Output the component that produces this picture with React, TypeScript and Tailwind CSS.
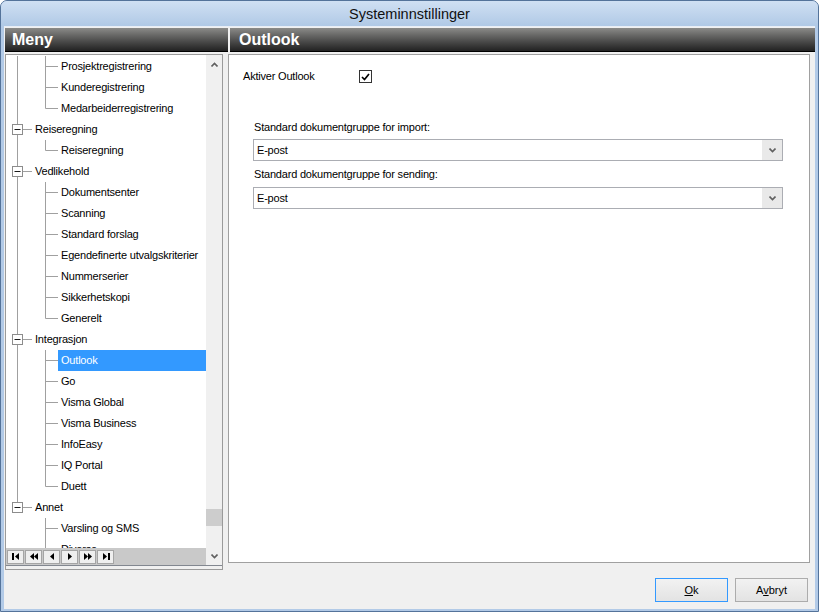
import React from 'react';

type Row = { t: string; lvl: 0 | 1; last?: boolean; lastTop?: boolean; noTop?: boolean; sel?: boolean };

const rows: Row[] = [
  { t: 'Prosjektregistrering', lvl: 1 },
  { t: 'Kunderegistrering', lvl: 1 },
  { t: 'Medarbeiderregistrering', lvl: 1, last: true },
  { t: 'Reiseregning', lvl: 0 },
  { t: 'Reiseregning', lvl: 1, last: true },
  { t: 'Vedlikehold', lvl: 0 },
  { t: 'Dokumentsenter', lvl: 1 },
  { t: 'Scanning', lvl: 1 },
  { t: 'Standard forslag', lvl: 1 },
  { t: 'Egendefinerte utvalgskriterier', lvl: 1 },
  { t: 'Nummerserier', lvl: 1 },
  { t: 'Sikkerhetskopi', lvl: 1 },
  { t: 'Generelt', lvl: 1, last: true },
  { t: 'Integrasjon', lvl: 0 },
  { t: 'Outlook', lvl: 1, sel: true },
  { t: 'Go', lvl: 1 },
  { t: 'Visma Global', lvl: 1 },
  { t: 'Visma Business', lvl: 1 },
  { t: 'InfoEasy', lvl: 1 },
  { t: 'IQ Portal', lvl: 1 },
  { t: 'Duett', lvl: 1, last: true },
  { t: 'Annet', lvl: 0, lastTop: true },
  { t: 'Varsling og SMS', lvl: 1, noTop: true },
  { t: 'Diverse', lvl: 1, noTop: true },
];

const LINE = '#a0a0a0';

function TreeRow({ r }: { r: Row }) {
  if (r.lvl === 0) {
    return (
      <div className="flex h-[21px] shrink-0 items-center">
        <svg width="26" height="21" className="shrink-0">
          <line x1="11.5" y1="0" x2="11.5" y2="5" stroke={LINE} />
          {!r.lastTop && <line x1="11.5" y1="16" x2="11.5" y2="21" stroke={LINE} />}
          <rect x="6.5" y="5.5" width="10" height="10" fill="#fff" stroke="#8c8c8c" />
          <line x1="8.5" y1="10.5" x2="14.5" y2="10.5" stroke="#1a1a1a" />
          <line x1="17" y1="10.5" x2="26" y2="10.5" stroke={LINE} />
        </svg>
        <span className="pl-[3px] leading-[13px]">{r.t}</span>
      </div>
    );
  }
  return (
    <div className="flex h-[21px] shrink-0 items-stretch">
      <svg width="52" height="21" className="shrink-0">
        {!r.noTop && <line x1="11.5" y1="0" x2="11.5" y2="21" stroke={LINE} />}
        <line x1="39.5" y1="0" x2="39.5" y2={r.last ? 10.5 : 21} stroke={LINE} />
        <line x1="39.5" y1="10.5" x2="52" y2="10.5" stroke={LINE} />
      </svg>
      <div className={`flex flex-1 items-center pl-[3px] leading-[13px] ${r.sel ? 'bg-[#3399ff] text-white' : ''}`}>
        {r.t}
      </div>
    </div>
  );
}

function NavGlyph({ kind }: { kind: number }) {
  const l = (x: number) => `${x + 4},0 ${x + 4},7 ${x},3.5`;
  const rt = (x: number) => `${x},0 ${x},7 ${x + 4},3.5`;
  return (
    <svg width="10" height="7">
      {kind === 0 && (<><rect x="1" y="0" width="2" height="7" fill="#000" /><polygon points={l(4)} fill="#000" /></>)}
      {kind === 1 && (<><polygon points={l(1)} fill="#000" /><polygon points={l(5)} fill="#000" /></>)}
      {kind === 2 && <polygon points={l(3)} fill="#000" />}
      {kind === 3 && <polygon points={rt(3)} fill="#000" />}
      {kind === 4 && (<><polygon points={rt(1)} fill="#000" /><polygon points={rt(5)} fill="#000" /></>)}
      {kind === 5 && (<><polygon points={rt(2)} fill="#000" /><rect x="7" y="0" width="2" height="7" fill="#000" /></>)}
    </svg>
  );
}

function Chevron({ up }: { up?: boolean }) {
  return (
    <svg width="7" height="5">
      <path d={up ? 'M0.5 4.5 L3.5 1.5 L6.5 4.5' : 'M0.5 0.5 L3.5 3.5 L6.5 0.5'} fill="none" stroke="#606060" strokeWidth="1.6" />
    </svg>
  );
}

function Select() {
  return (
    <div className="flex h-[22px] w-[530px] border border-[#abadb3] bg-white">
      <div className="flex flex-1 items-center pl-[3px]">E-post</div>
      <div className="flex w-[20px] items-center justify-center bg-[#e9e9e9]">
        <Chevron />
      </div>
    </div>
  );
}

export default function App() {
  return (
    <div className="flex h-[612px] w-[819px] flex-col overflow-hidden rounded-t-[7px] border border-[#54739a] bg-[#b2cae7] px-[3px] pb-[2px] font-['Liberation_Sans',Arial,sans-serif] text-[11px] tracking-[-0.2px] text-black">
      {/* Title bar */}
      <div className="-mx-[3px] flex h-[25px] shrink-0 items-center justify-center bg-linear-to-b from-[#d0e0f3] to-[#b0c9e6] pt-[3px] text-[14.5px] tracking-normal text-[#111]">
        Systeminnstillinger
      </div>

      {/* Client area */}
      <div className="flex flex-1 flex-col border-t border-[#e8eef6] bg-[#f0f0f0] pl-[1px] pt-[1px]">
        <div className="flex">
          {/* Left column */}
          <div className="flex w-[223px] flex-col">
            <div className="flex h-[24px] items-center border-b border-black bg-linear-to-b from-[#8b8b89] to-[#222] pl-[7px] text-[16px] font-bold tracking-normal text-white">
              Meny
            </div>
            <div className="mt-[2px] flex h-[516px] w-[218px] flex-col border border-[#9a9a9a]">
              <div className="flex h-[511px] border-b border-[#828790]">
                <div className="flex w-[200px] flex-col bg-white">
                  <div className="flex flex-1 flex-col overflow-hidden pt-[1px]">
                    {rows.map((r, i) => (
                      <TreeRow key={i} r={r} />
                    ))}
                  </div>
                  <div className="flex h-[17px] shrink-0 items-center gap-[1px] bg-[#c9c9c9] pl-[1px]">
                    {[0, 1, 2, 3, 4, 5].map((k) => (
                      <div
                        key={k}
                        className="flex h-[14px] w-[17px] items-center justify-center border border-[#a5a5a5] bg-[#efefef]"
                      >
                        <NavGlyph kind={k} />
                      </div>
                    ))}
                  </div>
                </div>
                <div className="flex w-[16px] flex-col items-center bg-[#f0f0f0]">
                  <div className="mt-[7px]">
                    <Chevron up />
                  </div>
                  <div className="mt-[442px] h-[17px] w-[16px] bg-[#cdcdcd]" />
                  <div className="mt-[28px]">
                    <Chevron />
                  </div>
                </div>
              </div>
            </div>
          </div>

          {/* Right column */}
          <div className="flex flex-col">
            <div className="ml-[2px] flex h-[24px] w-[585px] items-center border-b border-black bg-linear-to-b from-[#8b8b89] to-[#222] pl-[9px] text-[16px] font-bold tracking-normal text-white">
              Outlook
            </div>
            <div className="mt-[2px] flex h-[509px] w-[582px] flex-col border border-[#a0a0a0] bg-white">
              <div className="mt-[15px] flex h-[13px] items-center pl-[14px]">
                <span className="w-[116px]">Aktiver Outlook</span>
                <div className="flex h-[13px] w-[13px] items-center justify-center border border-[#333] bg-white">
                  <svg width="9" height="8">
                    <path d="M1 4 L3.5 6.5 L8 1" fill="none" stroke="#000" strokeWidth="1.7" />
                  </svg>
                </div>
              </div>
              <div className="mt-[38px] flex flex-col pl-[24px]">
                <div className="h-[13px] pl-[1px] leading-[13px]">Standard dokumentgruppe for import:</div>
                <div className="mt-[5px]">
                  <Select />
                </div>
                <div className="mt-[7px] h-[13px] pl-[1px] leading-[13px]">Standard dokumentgruppe for sending:</div>
                <div className="mt-[6px]">
                  <Select />
                </div>
              </div>
            </div>
          </div>
        </div>

        {/* Buttons */}
        <div className="mt-[8px] flex justify-end gap-[7px] pr-[7px] tracking-normal">
          <button className="flex h-[24px] w-[73px] items-center justify-center border border-[#3399ff] bg-linear-to-b from-[#f2f2f2] to-[#e3e3e3]">
            <span><span className="underline">O</span>k</span>
          </button>
          <button className="flex h-[24px] w-[73px] items-center justify-center border border-[#acacac] bg-linear-to-b from-[#f2f2f2] to-[#e3e3e3]">
            <span>A<span className="underline">v</span>bryt</span>
          </button>
        </div>
      </div>
    </div>
  );
}
